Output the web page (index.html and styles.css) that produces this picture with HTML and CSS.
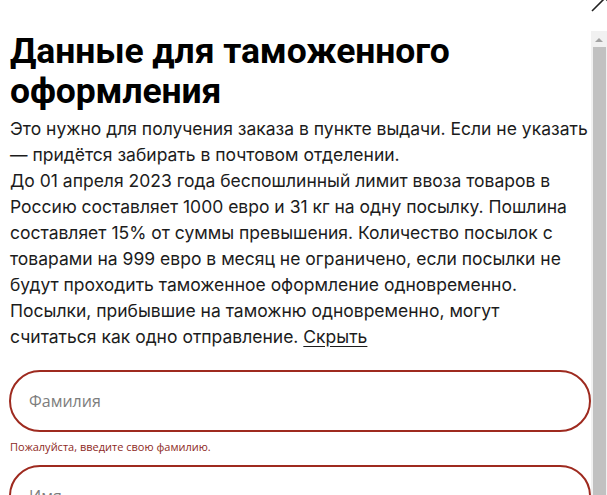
FILE: index.html
```html
<!DOCTYPE html>
<html lang="ru">
<head>
<meta charset="utf-8">
<link rel="stylesheet" href="styles.css">
</head>
<body>
<div class="modal">
  <div class="topbar">
    <svg class="close" width="30" height="30" viewBox="0 0 30 30" aria-hidden="true">
      <path d="M2 27 L28 1 M2 1 L28 27" stroke="#222" stroke-width="1.6" fill="none"/>
    </svg>
  </div>
  <div class="body">
    <div class="content">
      <h1 class="title">Данные для таможенного оформления</h1>
      <p class="info">Это нужно для получения заказа в пункте выдачи. Если не указать — придётся забирать в почтовом отделении.<br>До 01 апреля 2023 года беспошлинный лимит ввоза товаров в Россию составляет 1000 евро и 31 кг на одну посылку. Пошлина составляет 15% от суммы превышения. Количество посылок с товарами на 999 евро в месяц не ограничено, если посылки не будут проходить таможенное оформление одновременно. Посылки, прибывшие на таможню одновременно, могут<br>считаться как одно отправление. <a class="hide" href="#">Скрыть</a></p>
      <div class="field"><input class="input" type="text" placeholder="Фамилия"></div>
      <div class="error">Пожалуйста, введите свою фамилию.</div>
      <div class="field"><input class="input" type="text" placeholder="Имя"></div>
    </div>
    <div class="scrollbar">
      <div class="arrow"></div>
      <div class="thumb"></div>
    </div>
  </div>
</div>
</body>
</html>
```
FILE: styles.css
```css
html, body {
  margin: 0;
  padding: 0;
  background: #fff;
  overflow: hidden;
}
.modal {
  width: 607px;
  height: 495px;
  display: flex;
  flex-direction: column;
  overflow: hidden;
}
.topbar {
  height: 31px;
  flex: none;
  position: relative;
}
.close {
  position: absolute;
  left: 590px;
  top: -16px;
}
.body {
  flex: 1;
  display: flex;
  min-height: 0;
}
.content {
  flex: 1;
  padding: 0 0 0 10px;
  overflow: hidden;
}
.title {
  margin: 0;
  font-family: Roboto, "Liberation Sans", sans-serif;
  font-weight: 700;
  font-size: 35.5px;
  line-height: 40px;
  color: #000;
  letter-spacing: -0.1px;
}
.info {
  margin: 5px 0 0;
  font-family: Inter, "Liberation Sans", sans-serif;
  font-size: 17.5px;
  line-height: 26px;
  color: #1c1c1c;
}
.hide {
  color: #1c1c1c;
  text-decoration: underline;
  text-underline-offset: 3px;
}
.field {
  margin-top: 20px;
  margin-left: -1px;
}
.input {
  box-sizing: border-box;
  width: 582px;
  height: 62px;
  border: 2px solid #9e2a1f;
  border-radius: 31px;
  padding: 0 0 0 18px;
  font-family: "Open Sans", sans-serif;
  font-size: 16px;
  color: #333;
  background: #fff;
  outline: none;
}
.input::placeholder {
  color: #7d7d7d;
}
.error {
  margin-top: 7px;
  font-family: "Open Sans", sans-serif;
  font-size: 11px;
  line-height: 16px;
  color: #8e2a1e;
}
.error + .field {
  margin-top: 10px;
}
.scrollbar {
  width: 16px;
  flex: none;
  background: #f1f1f1;
  display: flex;
  flex-direction: column;
  align-items: center;
}
.arrow {
  width: 0;
  height: 0;
  margin-top: 7px;
  border-left: 4px solid transparent;
  border-right: 4px solid transparent;
  border-bottom: 4px solid #a3a3a3;
}
.thumb {
  margin-top: 5px;
  width: 13px;
  flex: 1;
  background: #c1c1c1;
}
```
